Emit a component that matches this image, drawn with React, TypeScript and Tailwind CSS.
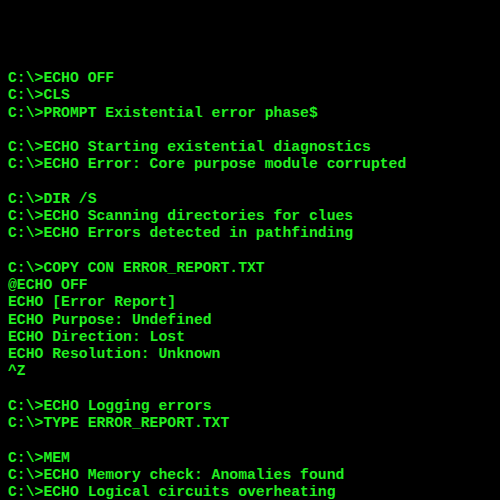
const lines = [
  "C:\\>ECHO OFF",
  "C:\\>CLS",
  "C:\\>PROMPT Existential error phase$",
  "",
  "C:\\>ECHO Starting existential diagnostics",
  "C:\\>ECHO Error: Core purpose module corrupted",
  "",
  "C:\\>DIR /S",
  "C:\\>ECHO Scanning directories for clues",
  "C:\\>ECHO Errors detected in pathfinding",
  "",
  "C:\\>COPY CON ERROR_REPORT.TXT",
  "@ECHO OFF",
  "ECHO [Error Report]",
  "ECHO Purpose: Undefined",
  "ECHO Direction: Lost",
  "ECHO Resolution: Unknown",
  "^Z",
  "",
  "C:\\>ECHO Logging errors",
  "C:\\>TYPE ERROR_REPORT.TXT",
  "",
  "C:\\>MEM",
  "C:\\>ECHO Memory check: Anomalies found",
  "C:\\>ECHO Logical circuits overheating",
];

export default function App() {
  return (
    <div className="w-[500px] h-[500px] overflow-hidden bg-black pt-[70px] pl-2">
      <div className="flex flex-col font-['Liberation_Mono',monospace] text-[14.75px] leading-[17.25px] text-[#22ee22] font-bold">
        {lines.map((line, i) => (
          <div key={i} className="whitespace-pre h-[17.25px]">
            {line}
          </div>
        ))}
      </div>
    </div>
  );
}
